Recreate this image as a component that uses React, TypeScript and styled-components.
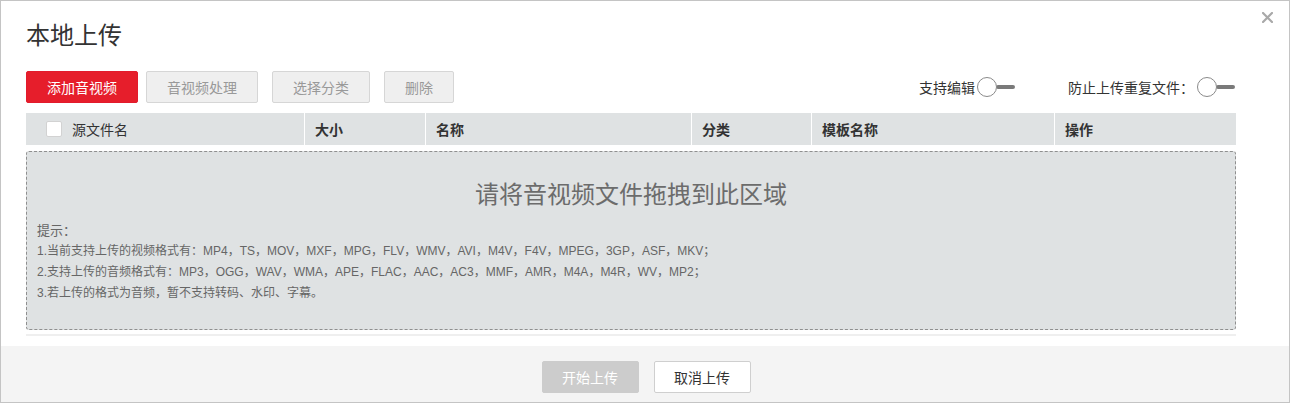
import React from 'react';
import styled, { createGlobalStyle } from 'styled-components';

const GlobalStyle = createGlobalStyle`
  html, body {
    margin: 0;
    padding: 0;
    background: #ffffff;
  }
  body {
    font-family: "Liberation Sans", "Noto Sans CJK SC", Arial, sans-serif;
    color: #333;
  }
  * {
    box-sizing: border-box;
  }
`;

const Dialog = styled.div`
  position: relative;
  width: 1290px;
  height: 403px;
  border: 1px solid #c4c4c4;
  background: #fff;
  display: flex;
  flex-direction: column;
`;

const CloseButton = styled.button`
  position: absolute;
  top: 9px;
  right: 15px;
  width: 14px;
  height: 14px;
  padding: 0;
  border: none;
  background: transparent;
  display: flex;
  align-items: center;
  justify-content: center;
  cursor: pointer;
`;

const Body = styled.div`
  flex: 1;
  padding: 0 53px 0 25px;
`;

const Title = styled.h2`
  margin: 0;
  padding-top: 17px;
  height: 70px;
  font-size: 24px;
  line-height: 36px;
  font-weight: normal;
  color: #333;
`;

const Toolbar = styled.div`
  display: flex;
  align-items: center;
  height: 32px;
  padding-right: 1px;
`;

const Button = styled.button<{ variant?: 'primary' | 'disabled' | 'default'; w: number }>`
  width: ${({ w }) => w}px;
  height: 32px;
  margin-right: ${({ variant }) => (variant === 'primary' ? 8 : 14)}px;
  padding: 0;
  border-radius: 2px;
  font-family: "Noto Sans CJK SC", sans-serif;
  font-size: 14px;
  cursor: pointer;
  border: 1px solid
    ${({ variant }) => (variant === 'primary' ? '#e21b2c' : variant === 'disabled' ? '#d6d6d6' : '#cfcfcf')};
  background: ${({ variant }) => (variant === 'primary' ? '#e61e2b' : variant === 'disabled' ? '#efefef' : '#fff')};
  color: ${({ variant }) => (variant === 'primary' ? '#fff' : variant === 'disabled' ? '#999' : '#333')};
`;

const Spacer = styled.div`
  flex: 1;
`;

const SwitchLabel = styled.label<{ gap: number }>`
  display: flex;
  align-items: center;
  margin-left: ${({ gap }) => gap}px;
  font-family: "Noto Sans CJK SC", sans-serif;
  font-size: 14px;
  color: #333;
`;

const SwitchTrack = styled.span<{ offset: number }>`
  position: relative;
  display: inline-block;
  width: 38px;
  height: 20px;
  margin-left: ${({ offset }) => offset}px;

  &::after {
    content: '';
    position: absolute;
    left: 19px;
    top: 8px;
    width: 19px;
    height: 4px;
    border-radius: 2px;
    background: #7a7a7a;
  }
`;

const SwitchKnob = styled.span`
  position: absolute;
  left: 0;
  top: 0;
  width: 20px;
  height: 20px;
  border-radius: 50%;
  border: 1px solid #8a8a8a;
  background: #fff;
  z-index: 1;
`;

const Table = styled.div`
  margin-top: 10px;
`;

const HeaderRow = styled.div`
  display: grid;
  grid-template-columns: 278px 121px 266px 120px 243px 182px;
  height: 32px;
  background: #dfe2e3;
`;

const HeaderCell = styled.div<{ first?: boolean }>`
  display: flex;
  align-items: center;
  padding-left: ${({ first }) => (first ? 20 : 10)}px;
  border-left: ${({ first }) => (first ? 'none' : '1px solid #fff')};
  font-family: "Noto Sans CJK SC", sans-serif;
  font-size: 14px;
  font-weight: ${({ first }) => (first ? 'normal' : 'bold')};
  color: #333;
`;

const Checkbox = styled.span`
  width: 16px;
  height: 16px;
  margin-right: 10px;
  border: 1px solid #d2d2d2;
  border-radius: 2px;
  background: #fff;
`;

const DropZone = styled.div`
  margin-top: 6px;
  height: 179px;
  border: 1px dashed #8f8f8f;
  border-radius: 3px;
  background: #dfe2e3;
  padding: 0 10px;
`;

const DropText = styled.div`
  padding-top: 23px;
  text-align: center;
  font-family: "Noto Sans CJK SC", sans-serif;
  font-size: 24px;
  line-height: 36px;
  color: #6c6c6c;
`;

const Tips = styled.div`
  margin-top: 10px;
  font-size: 12px;
  line-height: 21px;
  color: #666;
`;

const TipsTitle = styled.div`
  font-size: 13px;
  line-height: 20px;
`;

const Divider = styled.div`
  margin-top: 4px;
  height: 2px;
  background: #efefef;
`;

const Footer = styled.div`
  height: 56px;
  background: #f4f4f4;
  display: flex;
  justify-content: center;
  align-items: flex-start;
  gap: 15px;
  padding-top: 15px;
  padding-left: 2px;
`;

const FooterButton = styled.button<{ disabled?: boolean }>`
  width: 97px;
  height: 32px;
  padding: 0;
  border-radius: 2px;
  font-family: "Noto Sans CJK SC", sans-serif;
  font-size: 14px;
  border: 1px solid ${({ disabled }) => (disabled ? '#cccccc' : '#cfcfcf')};
  background: ${({ disabled }) => (disabled ? '#cccccc' : '#fff')};
  color: ${({ disabled }) => (disabled ? '#fff' : '#333')};
`;

const columns = ['大小', '名称', '分类', '模板名称', '操作'];

const tips = [
  '1.当前支持上传的视频格式有：MP4，TS，MOV，MXF，MPG，FLV，WMV，AVI，M4V，F4V，MPEG，3GP，ASF，MKV；',
  '2.支持上传的音频格式有：MP3，OGG，WAV，WMA，APE，FLAC，AAC，AC3，MMF，AMR，M4A，M4R，WV，MP2；',
  '3.若上传的格式为音频，暂不支持转码、水印、字幕。',
];

const Switch: React.FC<{ label: string; gap: number; offset: number }> = ({ label, gap, offset }) => (
  <SwitchLabel gap={gap}>
    {label}
    <SwitchTrack offset={offset}>
      <SwitchKnob />
    </SwitchTrack>
  </SwitchLabel>
);

export default function App() {
  return (
    <>
      <GlobalStyle />
      <Dialog>
        <CloseButton aria-label="关闭">
          <svg width="11" height="11" viewBox="0 0 11 11">
            <path d="M1 1 L10 10 M10 1 L1 10" stroke="#a9a9a9" strokeWidth="2.2" strokeLinecap="square" />
          </svg>
        </CloseButton>
        <Body>
          <Title>本地上传</Title>
          <Toolbar>
            <Button variant="primary" w={112}>
              添加音视频
            </Button>
            <Button variant="disabled" w={112}>
              音视频处理
            </Button>
            <Button variant="disabled" w={98}>
              选择分类
            </Button>
            <Button variant="disabled" w={70}>
              删除
            </Button>
            <Spacer />
            <Switch label="支持编辑" gap={0} offset={2} />
            <Switch label="防止上传重复文件：" gap={53} offset={3} />
          </Toolbar>
          <Table>
            <HeaderRow>
              <HeaderCell first>
                <Checkbox />
                源文件名
              </HeaderCell>
              {columns.map((c) => (
                <HeaderCell key={c}>{c}</HeaderCell>
              ))}
            </HeaderRow>
            <DropZone>
              <DropText>请将音视频文件拖拽到此区域</DropText>
              <Tips>
                <TipsTitle>提示：</TipsTitle>
                {tips.map((t) => (
                  <div key={t}>{t}</div>
                ))}
              </Tips>
            </DropZone>
            <Divider />
          </Table>
        </Body>
        <Footer>
          <FooterButton disabled>开始上传</FooterButton>
          <FooterButton>取消上传</FooterButton>
        </Footer>
      </Dialog>
    </>
  );
}
